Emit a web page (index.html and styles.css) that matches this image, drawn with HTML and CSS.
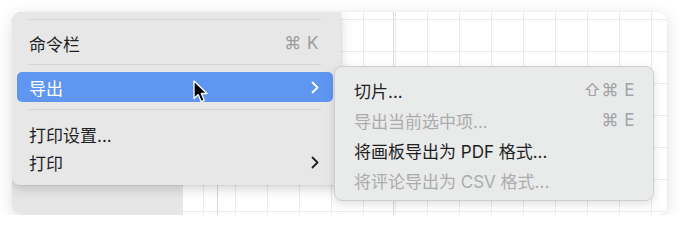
FILE: index.html
```html
<!DOCTYPE html>
<html lang="zh-CN">
<head>
<meta charset="utf-8">
<title>导出菜单</title>
<link rel="stylesheet" href="styles.css">
</head>
<body>
<div class="window">
  <div class="sidebar"></div>
  <div class="canvas"></div>

  <div class="menu">
    <div class="sep sep-1"></div>
    <div class="item item-first"><span class="label">命令栏</span><span class="key">⌘ K</span></div>
    <div class="sep sep-2"></div>
    <div class="item item-active"><span class="label">导出</span>
      <svg class="chev" width="8" height="13" viewBox="0 0 8 13"><path d="M1.5 1.5 L6.5 6.5 L1.5 11.5" fill="none" stroke="currentColor" stroke-width="1.8" stroke-linecap="round" stroke-linejoin="round"/></svg>
    </div>
    <div class="sep sep-3"></div>
    <div class="item item-print-setup"><span class="label">打印设置...</span></div>
    <div class="item"><span class="label">打印</span>
      <svg class="chev" width="8" height="13" viewBox="0 0 8 13"><path d="M1.5 1.5 L6.5 6.5 L1.5 11.5" fill="none" stroke="currentColor" stroke-width="1.8" stroke-linecap="round" stroke-linejoin="round"/></svg>
    </div>
  </div>

  <div class="submenu">
    <div class="sub-item"><span class="label">切片...</span><span class="key">⇧⌘ E</span></div>
    <div class="sub-item disabled"><span class="label">导出当前选中项...</span><span class="key">⌘ E</span></div>
    <div class="sub-item"><span class="label">将画板导出为 PDF 格式...</span></div>
    <div class="sub-item disabled"><span class="label">将评论导出为 CSV 格式...</span></div>
  </div>

  <svg class="cursor" width="16" height="24" viewBox="0 0 16 24">
    <path d="M1 1 L1 18.5 L5.2 14.6 L8.2 21.6 L11.2 20.3 L8.3 13.5 L14 13.5 Z" fill="#000" stroke="#fff" stroke-width="1.3" stroke-linejoin="round"/>
  </svg>
</div>
</body>
</html>
```

FILE: styles.css
```css
* { box-sizing: border-box; }

html, body {
  margin: 0;
  padding: 0;
  background: #ffffff;
}

body {
  padding: 12px 0 0 12px;
  font-family: "Inter", "Noto Sans CJK SC", sans-serif;
  font-size: 17px;
  color: #1f1f1f;
}

.window {
  position: relative;
  width: 655px;
  height: 203px;
  border-radius: 10px;
  overflow: hidden;
  display: grid;
  grid-template-columns: 171px 1fr;
  box-shadow: 0 3px 16px rgba(0, 0, 0, 0.13), 0 0 1px rgba(0, 0, 0, 0.12);
}

.sidebar {
  background: linear-gradient(#d6d6d6, #e6e6e6 70%);
}

.canvas {
  background-color: #ffffff;
  background-image:
    linear-gradient(90deg, transparent 34px, #d9d9d9 34px, #d9d9d9 35px, transparent 35px),
    linear-gradient(90deg, transparent 210px, #dadada 210px, #dadada 211px, transparent 211px),
    linear-gradient(90deg, #ebebeb 1px, transparent 1px),
    linear-gradient(#ebebeb 1px, transparent 1px);
  background-size: 100% 100%, 100% 100%, 32px 32px, 32px 32px;
  background-position: 0 0, 0 0, 20px 0, 0 7px;
}

.menu {
  position: absolute;
  left: 0;
  top: 0;
  width: 329px;
  height: 173px;
  background: #e7e7e7;
  border-radius: 0 0 7px 7px;
  box-shadow: 0 4px 12px rgba(0, 0, 0, 0.17), 0 0 0 0.5px rgba(0, 0, 0, 0.08);
  display: flex;
  flex-direction: column;
}

.sep {
  height: 1px;
  margin: 0 20px 0 17px;
  background: #d4d4d4;
}
.sep-1 { margin-top: 7px; }
.sep-2 { margin-top: 7px; }
.sep-3 { margin-top: 7px; }

.item {
  height: 28px;
  display: flex;
  align-items: center;
  justify-content: space-between;
  padding: 0 22px 0 17px;
}

.item-first { margin-top: 9px; }

.item-active {
  height: 30px;
  margin: 7px 8px 0 5px;
  padding: 0 14px 0 12px;
  background: #5f96f1;
  color: #ffffff;
  border-radius: 5px;
}

.item-print-setup { margin-top: 10px; }

.key {
  color: #9c9c9c;
  font-family: "Inter", "DejaVu Sans", sans-serif;
  letter-spacing: 0.5px;
}

.chev { display: block; }

.submenu {
  position: absolute;
  left: 322px;
  top: 54px;
  width: 320px;
  height: 135px;
  padding: 8px 18px 7px 19px;
  background: #e9eaea;
  border-radius: 8px;
  border: 0.5px solid #cfcfcf;
  box-shadow: 0 3px 10px rgba(0, 0, 0, 0.13);
}

.sub-item {
  height: 30px;
  display: flex;
  align-items: center;
  justify-content: space-between;
}

.sub-item.disabled .label { color: #acacac; }
.sub-item .key { color: #a3a3a3; }

.cursor {
  position: absolute;
  left: 181px;
  top: 68px;
}
```
